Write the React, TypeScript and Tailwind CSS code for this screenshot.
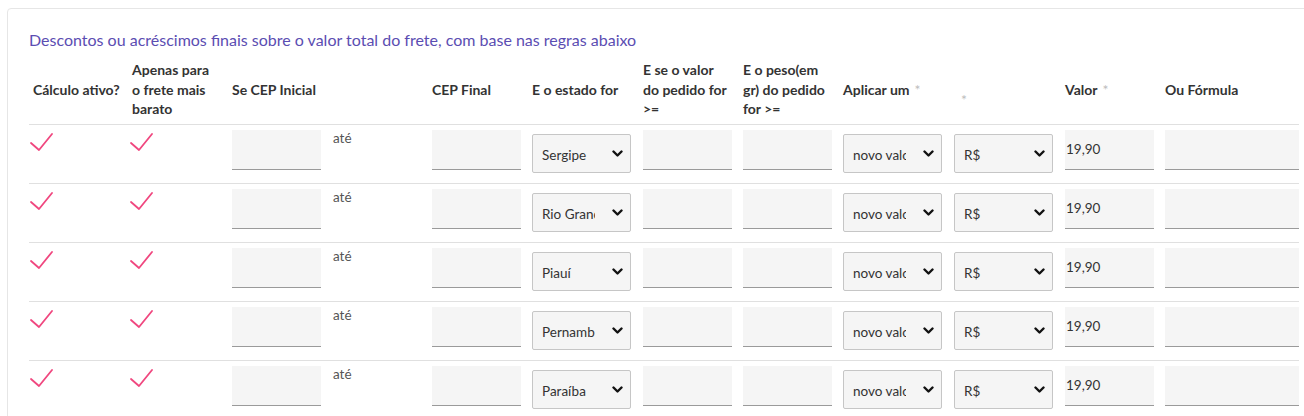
import React from "react";

const COLS =
  "grid grid-cols-[100px_100px_100px_100px_100px_111px_100px_100px_111px_111px_100px_137px]";

const rows = ["Sergipe", "Rio Grande do Sul", "Piauí", "Pernambuco", "Paraíba"];

function Check() {
  return (
    <svg width="26" height="20" viewBox="0 0 26 20" className="block">
      <polyline
        points="2,10 10,17 23,1"
        fill="none"
        stroke="#f0477f"
        strokeWidth="1.8"
        strokeLinecap="round"
        strokeLinejoin="round"
      />
    </svg>
  );
}

function Chevron() {
  return (
    <svg width="11" height="8" viewBox="0 0 11 8" className="block">
      <polyline
        points="1.5,1.5 5.5,5.5 9.5,1.5"
        fill="none"
        stroke="#111"
        strokeWidth="2.4"
        strokeLinecap="round"
        strokeLinejoin="round"
      />
    </svg>
  );
}

function Sel({ text }: { text: string }) {
  return (
    <div className="mt-[9px] h-[39px] w-[99px] rounded-[2px] border border-[#c6c6c6] bg-[#f5f5f5] flex items-center pl-[9px] pr-[4px]">
      <span className="w-[53px] overflow-hidden whitespace-nowrap text-[13.5px] text-[#333] leading-[18px] pt-[2px]">
        {text}
      </span>
      <span className="ml-auto mr-[3px]">
        <Chevron />
      </span>
    </div>
  );
}

function Inp({ w, value }: { w: string; value?: string }) {
  return (
    <div
      className={`mt-[5px] h-[40px] ${w} bg-[#f5f5f5] border-b border-[#9a9a9a] flex items-center pl-[1px] text-[13.5px] text-[#333]`}
    >
      {value}
    </div>
  );
}

const Star = () => <span className="text-[#bdbdbd] font-normal ml-[5px]">*</span>;

export default function App() {
  return (
    <div
      className="w-[1304px] h-[416px] overflow-hidden bg-white pl-[7px] pt-[8px]"
      style={{ fontFamily: "Lato, 'Open Sans', sans-serif" }}
    >
      <div className="w-[1320px] h-[440px] border border-[#e6e6e6] rounded-[4px] pl-[21px] pt-[21px]">
        <div className="text-[16px] leading-[20px] text-[#5b4db2] mb-[10px]">
          Descontos ou acréscimos finais sobre o valor total do frete, com base nas regras abaixo
        </div>
        <div className="w-[1270px]">
          <div
            className={`${COLS} h-[65px] pb-[5px] border-b border-[#e0e0e0] text-[14px] font-bold text-[#333] leading-[19.5px] whitespace-nowrap`}
          >
            <div className="flex items-center pl-[4px]">Cálculo ativo?</div>
            <div className="flex items-center pl-[3px]">
              Apenas para
              <br />o frete mais
              <br />
              barato
            </div>
            <div className="flex items-center pl-[3px] col-span-2">Se CEP Inicial</div>
            <div className="flex items-center pl-[3px]">CEP Final</div>
            <div className="flex items-center pl-[3px]">E o estado for</div>
            <div className="flex items-center pl-[3px]">
              E se o valor
              <br />
              do pedido for
              <br />
              &gt;=
            </div>
            <div className="flex items-center pl-[3px]">
              E o peso(em
              <br />
              gr) do pedido
              <br />
              for &gt;=
            </div>
            <div className="flex items-center pl-[3px]">
              Aplicar um<Star />
            </div>
            <div className="flex items-center pl-[10px] pt-[20px]">
              <span className="text-[#bdbdbd] font-normal">*</span>
            </div>
            <div className="flex items-center pl-[3px]">
              Valor<Star />
            </div>
            <div className="flex items-center pl-[3px]">Ou Fórmula</div>
          </div>
          {rows.map((st) => (
            <div key={st} className={`${COLS} h-[59px] border-b border-[#e0e0e0]`}>
              <div className="pt-[8px]">
                <Check />
              </div>
              <div className="pt-[8px]">
                <Check />
              </div>
              <div className="pl-[3px]">
                <Inp w="w-[89px]" />
              </div>
              <div className="pl-[4px] pt-[3px] text-[13.5px] leading-[20px] text-[#555]">até</div>
              <div className="pl-[3px]">
                <Inp w="w-[89px]" />
              </div>
              <div className="pl-[3px]">
                <Sel text={st} />
              </div>
              <div className="pl-[3px]">
                <Inp w="w-[89px]" />
              </div>
              <div className="pl-[3px]">
                <Inp w="w-[89px]" />
              </div>
              <div className="pl-[3px]">
                <Sel text="novo valor" />
              </div>
              <div className="pl-[3px]">
                <Sel text="R$" />
              </div>
              <div className="pl-[3px]">
                <Inp w="w-[89px]" value="19,90" />
              </div>
              <div className="pl-[3px]">
                <Inp w="w-[134px]" />
              </div>
            </div>
          ))}
        </div>
      </div>
    </div>
  );
}
